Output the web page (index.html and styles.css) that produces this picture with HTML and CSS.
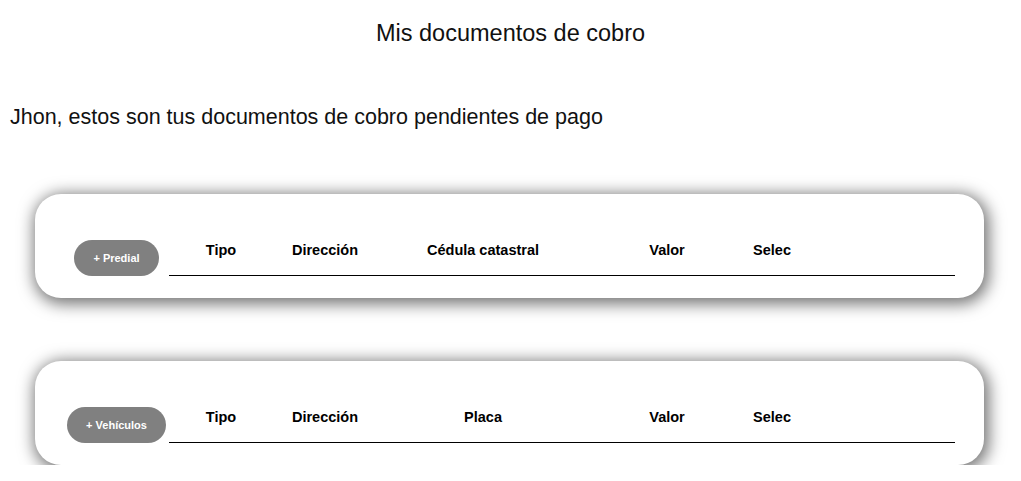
FILE: index.html
```html
<!DOCTYPE html>
<html>
<head>
  <meta charset="utf-8">
  <title>Mis documentos de cobro</title>
  <link rel="stylesheet" href="styles.css">
</head>
<body>

<h1 class="Title">Mis documentos de cobro</h1>

<p class="Greeting">Jhon, estos son tus documentos de cobro pendientes de pago</p>

<!-- Predial -->
<section class="Card">
  <div class="Card-action">
    <button class="AddButton" type="button">+ Predial</button>
  </div>
  <div class="DocTable">
    <div class="DocTable-head">
      <span>Tipo</span>
      <span>Dirección</span>
      <span>Cédula catastral</span>
      <span>Valor</span>
      <span>Selec</span>
    </div>
  </div>
</section>

<!-- Vehículos -->
<section class="Card">
  <div class="Card-action">
    <button class="AddButton" type="button">+ Vehículos</button>
  </div>
  <div class="DocTable">
    <div class="DocTable-head">
      <span>Tipo</span>
      <span>Dirección</span>
      <span>Placa</span>
      <span>Valor</span>
      <span>Selec</span>
    </div>
  </div>
</section>

</body>
</html>
```

FILE: styles.css
```css
body {
  margin: 8px;
  font-family: "Liberation Sans", Arial, sans-serif;
  color: #111;
  background: #fff;
}
.Title {
  margin: 12px 0 0;
  font-size: 23.5px;
  font-weight: normal;
  text-align: center;
}
.Greeting {
  margin: 58px 0 0 2px;
  font-size: 21.5px;
}
.Card {
  display: flex;
  align-items: flex-end;
  box-sizing: border-box;
  height: 104px;
  margin: 64px 29px 0 27px;
  padding: 0 29px 22px;
  border-radius: 26px;
  background: #fff;
  box-shadow: 2px 3px 16px 3px rgba(0, 0, 0, 0.55);
}
.Card + .Card {
  margin-top: 63px;
}
.Card-action {
  display: flex;
  justify-content: center;
  width: 105px;
  flex: none;
}
.AddButton {
  height: 36px;
  padding: 0 19px;
  border: 0;
  border-radius: 18px;
  background-color: #808080;
  color: #fff;
  font: bold 11px "Liberation Sans", Arial, sans-serif;
  cursor: pointer;
}
.DocTable {
  flex: 1;
  border-bottom: 1px solid #000;
}
.DocTable-head {
  display: grid;
  grid-template-columns: 104px 104px 212px 156px 54px 1fr;
  align-items: center;
  height: 50px;
  font-size: 14.5px;
  font-weight: bold;
  color: #000;
}
.DocTable-head span {
  text-align: center;
  white-space: nowrap;
}
```
